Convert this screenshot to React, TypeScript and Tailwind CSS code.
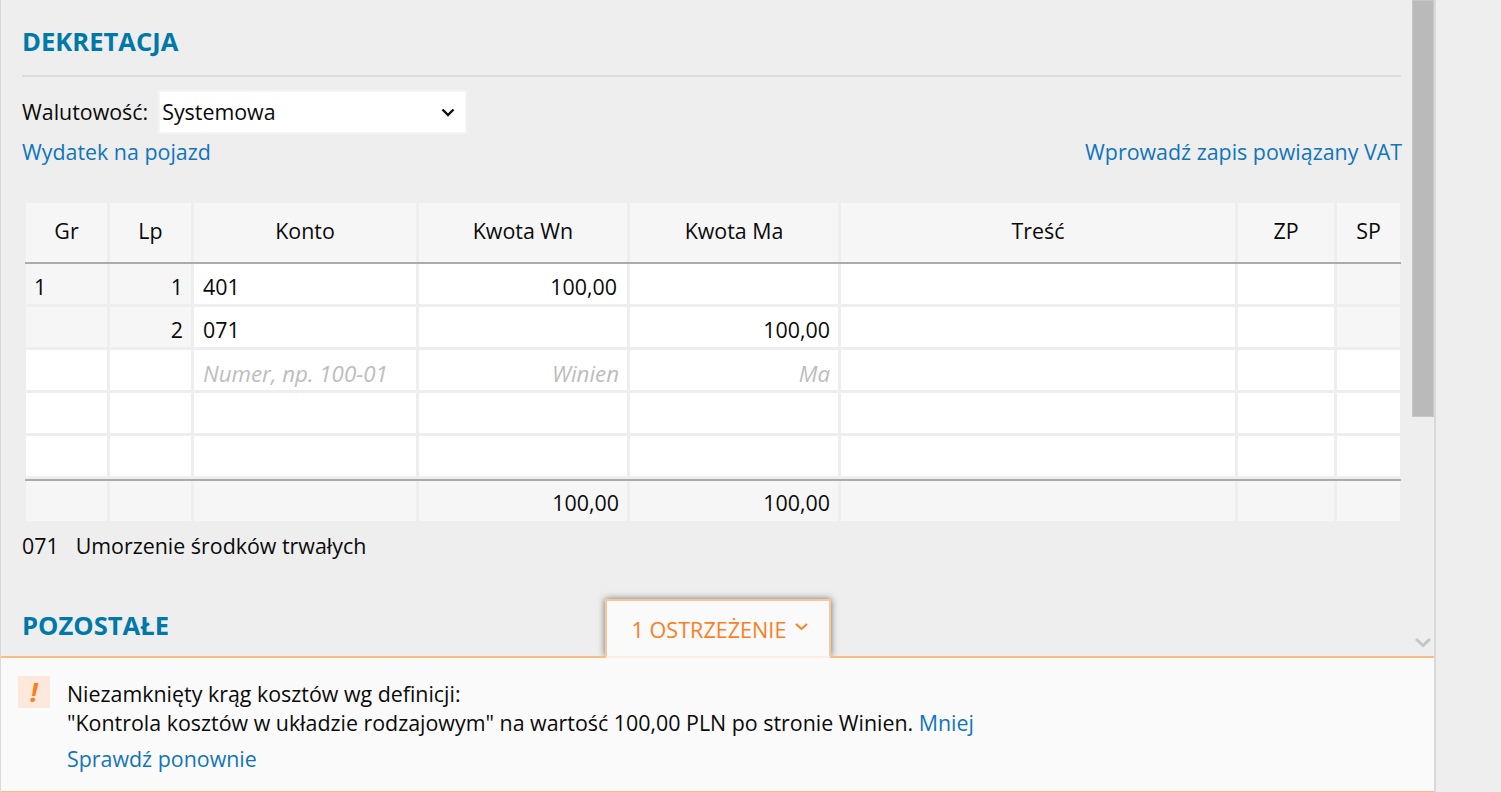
import React from 'react';

const font = "font-['Open_Sans',sans-serif]";

const columns = 'grid grid-cols-[84px_84px_225px_211px_211px_397px_99px_63px]';

const headers = ['Gr', 'Lp', 'Konto', 'Kwota Wn', 'Kwota Ma', 'Treść', 'ZP', 'SP'];

const rows = [
  { gr: '1', lp: '1', konto: '401', wn: '100,00', ma: '', grey: true },
  { gr: '', lp: '2', konto: '071', wn: '', ma: '100,00', grey: true },
  { gr: '', lp: '', konto: '', wn: '', ma: '', grey: false, hint: true },
  { gr: '', lp: '', konto: '', wn: '', ma: '', grey: false },
  { gr: '', lp: '', konto: '', wn: '', ma: '', grey: false },
];

const hintText = 'italic text-[#bdbdbd] text-[22.3px]';

const Cell: React.FC<{ className?: string; last?: boolean; children?: React.ReactNode }> = ({ className = '', last, children }) => (
  <div className={`flex items-center overflow-hidden whitespace-nowrap ${last ? '' : 'border-r-[3px] border-[#eeeeee]'} ${className}`}>
    {children}
  </div>
);

const Dekretacja: React.FC = () => (
  <div className="w-[1375px] ml-[4px] mt-[37px]">
    <div className={`${columns} h-[59px]`}>
      {headers.map((h, i) => (
        <Cell key={h} last={i === 7} className="justify-center pb-[3px] bg-[#f6f6f6]">{h}</Cell>
      ))}
    </div>
    <div className="h-[2px] bg-[#ababab] w-[1376px] -ml-[1px]" />
    {rows.map((r, i) => (
      <div key={i} className={`${columns} h-[43px] first:h-[44px] border-b-[3px] border-[#eeeeee] last:h-[42px] last:border-b-[2px]`}>
        <Cell className={`pl-[8px] pt-[5px] ${r.grey ? 'bg-[#f6f6f6]' : 'bg-white'}`}>{r.gr}</Cell>
        <Cell className={`justify-end pr-[8px] pt-[5px] ${r.grey ? 'bg-[#f6f6f6]' : 'bg-white'}`}>{r.lp}</Cell>
        <Cell className={`pl-[9px] bg-white ${r.hint ? 'pt-[7px]' : 'pt-[5px]'}`}>
          {r.hint ? <span className={hintText}>Numer, np. 100-01</span> : r.konto}
        </Cell>
        <Cell className={`justify-end bg-white ${r.hint ? 'pr-[8px] pt-[7px]' : 'pr-[10px] pt-[5px]'}`}>
          {r.hint ? <span className={hintText}>Winien</span> : r.wn}
        </Cell>
        <Cell className={`justify-end pr-[8px] bg-white ${r.hint ? 'pt-[7px]' : 'pt-[5px]'}`}>
          {r.hint ? <span className={hintText}>Ma</span> : r.ma}
        </Cell>
        <Cell className="bg-white" />
        <Cell className="bg-white" />
        <Cell last className={r.grey ? 'bg-[#f6f6f6]' : 'bg-white'} />
      </div>
    ))}
    <div className="h-[2px] bg-[#ababab] w-[1376px] -ml-[1px]" />
    <div className={`${columns} h-[40px]`}>
      <Cell className="bg-[#f6f6f6]" />
      <Cell className="bg-[#f6f6f6]" />
      <Cell className="bg-[#f6f6f6]" />
      <Cell className="justify-end pr-[8px] pt-[3px] bg-[#f6f6f6]">100,00</Cell>
      <Cell className="justify-end pr-[8px] pt-[3px] bg-[#f6f6f6]">100,00</Cell>
      <Cell className="bg-[#f6f6f6]" />
      <Cell className="bg-[#f6f6f6]" />
      <Cell last className="bg-[#f6f6f6]" />
    </div>
  </div>
);

export default function App() {
  return (
    <div className={`${font} w-[1501px] h-[792px] overflow-hidden bg-[#eeeeee] text-[21.4px] leading-[28px] text-[#0a0a0a]`}>
      <div className="relative w-[1436px] h-full flex flex-col border-l-[1px] border-r-[2px] border-[#d9d9d9]">
        <div className="flex-1 flex min-h-0">
          <div className="w-[1411px] pl-[21px] overflow-hidden">
            <h2 className="mt-[25px] text-[25.6px] leading-[34px] font-bold text-[#0079a8]">DEKRETACJA</h2>
            <div className="mt-[16px] w-[1379px] h-[2px] bg-[#dcdcdc]" />
            <div className="mt-[13px] flex items-center">
              <span>Walutowość:</span>
              <div className="ml-[10px] w-[309px] h-[44px] bg-white border-[2px] border-[#f4f4f4] flex items-center justify-between pl-[2px] pr-[10px]">
                <span>Systemowa</span>
                <svg width="14" height="9" viewBox="0 0 14 9" fill="none" stroke="#111" strokeWidth="2.4"><path d="M1.5 1.5 L7 7 L12.5 1.5" /></svg>
              </div>
            </div>
            <div className="w-[1380px] mt-[4px] flex justify-between text-[#1075bb]">
              <a>Wydatek na pojazd</a>
              <a>Wprowadź zapis powiązany VAT</a>
            </div>
            <Dekretacja />
            <div className="mt-[11px] flex">
              <span>071</span>
              <span className="ml-[17px]">Umorzenie środków trwałych</span>
            </div>
            <h2 className="mt-[49px] text-[25.6px] leading-[34px] font-bold text-[#0079a8]">POZOSTAŁE</h2>
          </div>
          <div className="w-[22px] flex flex-col items-center justify-between">
            <div className="w-[22px] h-[417px] bg-[#bababa] border border-[#c6c6c6]" />
            <svg className="mb-[8px]" width="16" height="11" viewBox="0 0 16 11" fill="none" stroke="#c4c4c4" strokeWidth="3"><path d="M1 2 L8 8.5 L15 2" /></svg>
          </div>
        </div>
        <div className="absolute left-[604px] top-[599px] w-[226px] h-[57px] bg-[#fafafa] border-t-[2px] border-x-[2px] border-[#fdc598] shadow-[0_0_7px_rgba(0,0,0,0.55)] flex items-center justify-center gap-[9px] pt-[2px] pl-[4px] text-[21.6px] text-[#fb7f1f]">
          <span>1 OSTRZEŻENIE</span>
          <svg className="mb-[5px]" width="13" height="8" viewBox="0 0 13 8" fill="none" stroke="#fb7f1f" strokeWidth="2"><path d="M1 1 L6.5 6 L12 1" /></svg>
        </div>
        <div className="relative h-[136px] bg-[#fafafa] border-t-[2px] border-b-[1px] border-[#fdbb84] pl-[17px] pt-[18px] flex">
          <div className="absolute left-[605px] -top-[2px] w-[224px] h-[2px] bg-[#fdeee2]" />
          <div className="w-[32px] h-[32px] bg-[#fde9dc] flex items-center justify-center">
            <span className="text-[#fb7f1f] font-bold italic text-[26px] leading-none">!</span>
          </div>
          <div className="ml-[17px] mt-[3px] leading-[29px]">
            <div>Niezamknięty krąg kosztów wg definicji:</div>
            <div>
              "Kontrola kosztów w układzie rodzajowym" na wartość 100,00 PLN po stronie Winien.{' '}
              <a className="text-[#1075bb]">Mniej</a>
            </div>
            <a className="block mt-[7px] text-[#1075bb]">Sprawdź ponownie</a>
          </div>
        </div>
      </div>
    </div>
  );
}
